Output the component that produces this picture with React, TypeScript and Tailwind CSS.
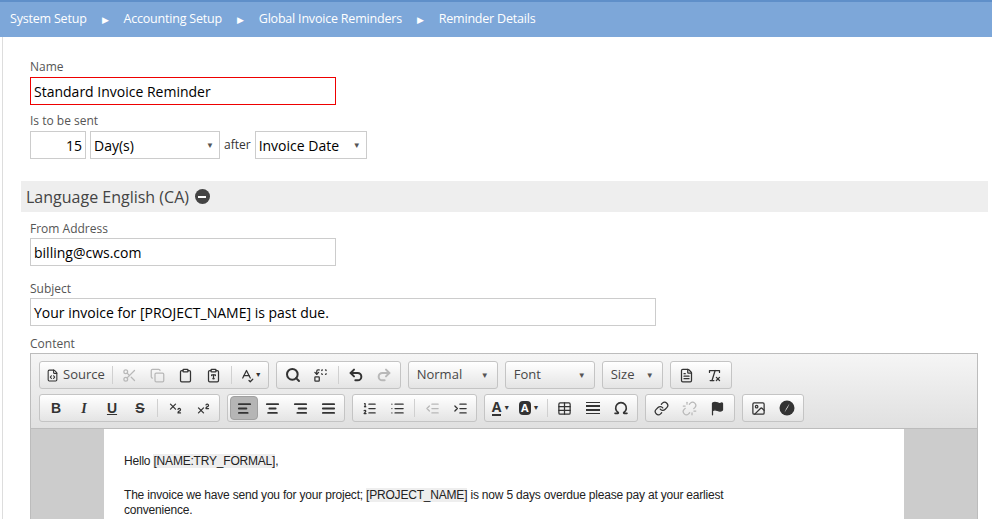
import React from "react";
import {
  FileCode, Scissors, Copy, Clipboard, ClipboardType, SpellCheck, Search, Replace, Undo2, Redo2,
  Subscript, Superscript, AlignLeft, AlignCenter, AlignRight, AlignJustify, ListOrdered, List,
  IndentDecrease, IndentIncrease, Table, Omega, Link, Unlink, Flag, Image, RemoveFormatting, FileText,
} from "lucide-react";

const Sep = () => <div className="w-px h-[18px] bg-[#d0d0d0] mx-[3px]" />;
const Btn = ({ children, active, dim }: { children: React.ReactNode; active?: boolean; dim?: boolean }) => (
  <div className={`h-[24px] min-w-[28px] px-[4px] flex items-center justify-center rounded-sm ${active ? "bg-[#b5b5b5] border border-[#a0a0a0]" : ""} ${dim ? "text-[#b8b8b8]" : "text-[#333]"}`}>
    {children}
  </div>
);
const Group = ({ children }: { children: React.ReactNode }) => (
  <div className="flex items-center h-[28px] px-[2px] border border-[#c4c4c4] rounded-[3px] bg-gradient-to-b from-white to-[#e4e4e4]">{children}</div>
);
const Combo = ({ label, w }: { label: string; w: string }) => (
  <div className={`${w} h-[28px] flex items-center justify-between px-[8px] border border-[#c4c4c4] rounded-[3px] bg-gradient-to-b from-white to-[#e4e4e4] text-[13px] text-[#474747]`}>
    <span>{label}</span>
    <span className="text-[8px] text-[#555]">▼</span>
  </div>
);
const ic = { size: 15, strokeWidth: 2 };

export default function App() {
  return (
    <div className="w-[992px] h-[519px] overflow-hidden bg-white" style={{ fontFamily: '"Open Sans", "Noto Sans", sans-serif' }}>
      <div className="h-[37px] bg-[#7da7d9] border-t-2 border-[#5f8fc9] flex items-center text-white text-[12.5px] tracking-[-0.2px] pl-[10px]">
        <span>System Setup</span>
        <span className="mx-[15px] text-[9px]">▶</span>
        <span>Accounting Setup</span>
        <span className="mx-[15px] text-[9px]">▶</span>
        <span>Global Invoice Reminders</span>
        <span className="mx-[15px] text-[9px]">▶</span>
        <span>Reminder Details</span>
      </div>
      <div className="border-l border-[#ddd] ml-[2px] h-full pt-[22px]">
        <div className="pl-[27px]">
          <div className="text-[12px] text-[#555] leading-[16px]">Name</div>
          <div className="mt-[2px] w-[306px] h-[28px] border border-[#e00] flex items-center pl-[3px] text-[14px] text-black">Standard Invoice Reminder</div>
          <div className="mt-[8px] text-[12px] text-[#555] leading-[16px]">Is to be sent</div>
          <div className="mt-[2px] flex items-center gap-[4px]">
            <div className="w-[56px] h-[28px] border border-[#ccc] flex items-center justify-end pr-[3px] text-[14px]">15</div>
            <div className="w-[130px] h-[28px] border border-[#ccc] flex items-center justify-between px-[3px] text-[14px]">
              <span>Day(s)</span><span className="text-[8px] text-[#555] mr-[2px]">▼</span>
            </div>
            <span className="text-[12px] text-[#333]">after</span>
            <div className="w-[112px] h-[28px] border border-[#ccc] flex items-center justify-between px-[3px] text-[14px]">
              <span>Invoice Date</span><span className="text-[8px] text-[#555] mr-[2px]">▼</span>
            </div>
          </div>
        </div>
        <div className="ml-[18px] mr-[4px] mt-[22px] h-[31px] bg-[#eeeeee] flex items-center pl-[5px] text-[16px] text-[#444]">
          Language English (CA)
          <span className="ml-[6px] w-[15px] h-[15px] rounded-full bg-[#444] flex items-center justify-center">
            <span className="w-[8px] h-[2px] bg-white" />
          </span>
        </div>
        <div className="pl-[27px] mt-[9px]">
          <div className="text-[12px] text-[#555] leading-[16px]">From Address</div>
          <div className="mt-[1px] w-[306px] h-[28px] border border-[#ccc] flex items-center pl-[3px] text-[14px]">billing@cws.com</div>
          <div className="mt-[15px] text-[12px] text-[#555] leading-[16px]">Subject</div>
          <div className="mt-[1px] w-[626px] h-[28px] border border-[#ccc] flex items-center pl-[3px] text-[14px]">Your invoice for [PROJECT_NAME] is past due.</div>
          <div className="mt-[10px] text-[12px] text-[#555] leading-[16px]">Content</div>
          <div className="mt-[1px] w-[948px] border border-[#bcbcbc]">
            <div className="bg-gradient-to-b from-[#f5f5f5] to-[#e0e0e0] border-b border-[#bcbcbc] px-[8px] pt-[7px] pb-[6px] flex flex-col gap-[5px]">
              <div className="flex gap-[7px]">
                <Group>
                  <Btn><FileCode size={13} /><span className="ml-[4px] text-[13px] text-[#474747]">Source</span></Btn>
                  <Sep />
                  <Btn dim><Scissors {...ic} /></Btn>
                  <Btn dim><Copy {...ic} /></Btn>
                  <Btn><Clipboard {...ic} /></Btn>
                  <Btn><ClipboardType {...ic} /></Btn>
                  <Sep />
                  <Btn><SpellCheck {...ic} /><span className="text-[7px] ml-[1px]">▼</span></Btn>
                </Group>
                <Group>
                  <Btn><Search size={16} strokeWidth={3} /></Btn>
                  <Btn><Replace {...ic} /></Btn>
                  <Sep />
                  <Btn><Undo2 size={16} strokeWidth={3} /></Btn>
                  <Btn dim><Redo2 size={16} strokeWidth={3} /></Btn>
                </Group>
                <Combo label="Normal" w="w-[90px]" />
                <Combo label="Font" w="w-[90px]" />
                <Combo label="Size" w="w-[61px]" />
                <Group>
                  <Btn><FileText {...ic} /></Btn>
                  <Btn><RemoveFormatting {...ic} /></Btn>
                </Group>
              </div>
              <div className="flex gap-[7px]">
                <Group>
                  <Btn><span className="font-bold text-[14px]" style={{ fontFamily: "Arial, sans-serif" }}>B</span></Btn>
                  <Btn><span className="italic font-bold text-[14px]" style={{ fontFamily: '"Liberation Serif", serif' }}>I</span></Btn>
                  <Btn><span className="underline font-bold text-[14px]" style={{ fontFamily: "Arial, sans-serif" }}>U</span></Btn>
                  <Btn><span className="line-through font-bold text-[14px]" style={{ fontFamily: "Arial, sans-serif" }}>S</span></Btn>
                  <Sep />
                  <Btn><Subscript {...ic} /></Btn>
                  <Btn><Superscript {...ic} /></Btn>
                </Group>
                <Group>
                  <Btn active><AlignLeft {...ic} strokeWidth={3} /></Btn>
                  <Btn><AlignCenter {...ic} strokeWidth={3} /></Btn>
                  <Btn><AlignRight {...ic} strokeWidth={3} /></Btn>
                  <Btn><AlignJustify {...ic} strokeWidth={3} /></Btn>
                </Group>
                <Group>
                  <Btn><ListOrdered {...ic} /></Btn>
                  <Btn><List {...ic} /></Btn>
                  <Sep />
                  <Btn dim><IndentDecrease {...ic} /></Btn>
                  <Btn><IndentIncrease {...ic} /></Btn>
                </Group>
                <Group>
                  <Btn><span className="font-bold text-[14px] border-b-2 border-[#333] leading-[14px]">A</span><span className="text-[7px] ml-[2px]">▼</span></Btn>
                  <Btn><span className="font-bold text-[11px] bg-[#333] text-white px-[2px] rounded-sm leading-[14px]">A</span><span className="text-[7px] ml-[2px]">▼</span></Btn>
                  <Sep />
                  <Btn><Table {...ic} /></Btn>
                  <Btn><span className="flex flex-col gap-[2px]"><span className="w-[14px] h-px bg-[#333]" /><span className="w-[14px] h-[2px] bg-[#333]" /><span className="w-[14px] h-[2px] bg-[#333]" /><span className="w-[14px] h-px bg-[#333]" /></span></Btn>
                  <Btn><Omega size={16} strokeWidth={2.5} /></Btn>
                </Group>
                <Group>
                  <Btn><Link {...ic} /></Btn>
                  <Btn dim><Unlink {...ic} /></Btn>
                  <Btn><Flag size={15} fill="#333" /></Btn>
                </Group>
                <Group>
                  <Btn><Image {...ic} /></Btn>
                  <Btn>
                    <svg width="16" height="16" viewBox="0 0 16 16">
                      <circle cx="8" cy="8" r="7.5" fill="#333" />
                      <path d="M10.5 3.5 L7 9 L5.5 12.5 L9 7 Z" fill="white" />
                    </svg>
                  </Btn>
                </Group>
              </div>
            </div>
            <div className="bg-[#cccccc] h-[120px] px-[73px]">
              <div className="bg-white h-full pl-[20px] pt-[23px] text-[12px] text-[#222] tracking-[-0.2px]" style={{ fontFamily: '"Liberation Sans", Arial, sans-serif' }}>
                <p>Hello <span className="bg-[#eeeeee]">[NAME:TRY_FORMAL]</span>,</p>
                <p className="mt-[18px] w-[605px] leading-[15px]">The invoice we have send you for your project; <span className="bg-[#eeeeee]">[PROJECT_NAME]</span> is now 5 days overdue please pay at your earliest convenience.</p>
              </div>
            </div>
          </div>
        </div>
      </div>
    </div>
  );
}
